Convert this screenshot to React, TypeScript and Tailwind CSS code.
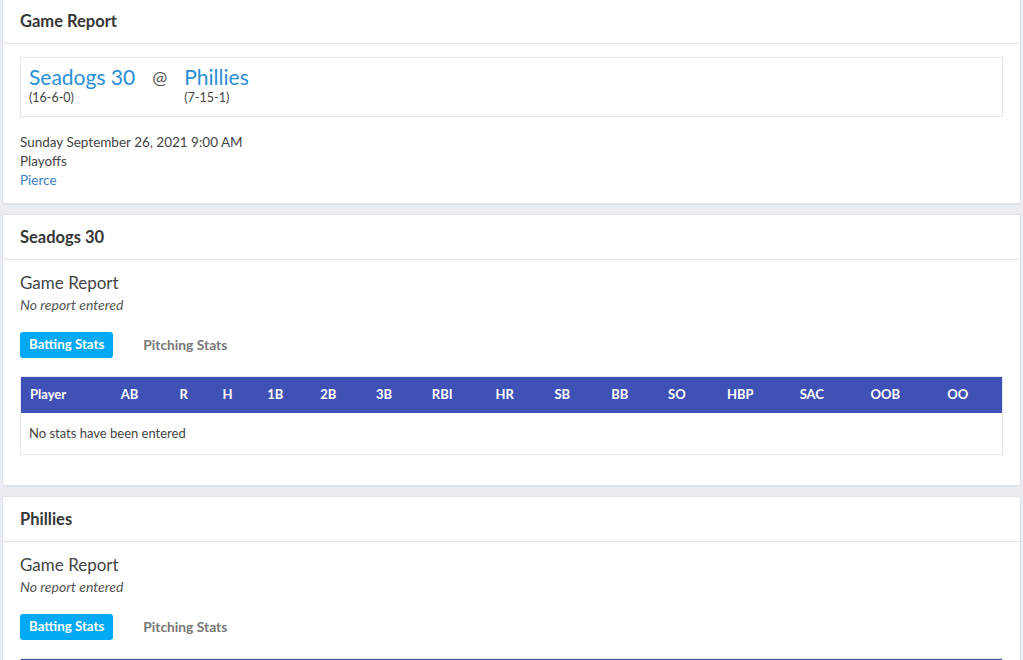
import React from "react"

const columns = [
  { label: "Player", w: "w-[91px]" },
  { label: "AB", w: "w-[59px]" },
  { label: "R", w: "w-[43px]" },
  { label: "H", w: "w-[45px]" },
  { label: "1B", w: "w-[53px]" },
  { label: "2B", w: "w-[56px]" },
  { label: "3B", w: "w-[56px]" },
  { label: "RBI", w: "w-[64px]" },
  { label: "HR", w: "w-[59px]" },
  { label: "SB", w: "w-[57px]" },
  { label: "BB", w: "w-[57px]" },
  { label: "SO", w: "w-[59px]" },
  { label: "HBP", w: "w-[73px]" },
  { label: "SAC", w: "w-[71px]" },
  { label: "OOB", w: "w-[77px]" },
  { label: "OO", w: "w-[64px]" },
]

function Card({ title, children, className = "" }: { title: string; children: React.ReactNode; className?: string }) {
  return (
    <section className={`mx-[2px] bg-white border border-[#dfe3e8] rounded-[3px] shadow-[0_1px_1px_rgba(0,0,0,0.04)] ${className}`}>
      <header className="h-[45px] flex items-center px-[17px] border-b border-[#e2e6eb]">
        <h2 className="text-[16.5px] font-bold text-[#363636]">{title}</h2>
      </header>
      {children}
    </section>
  )
}

function TeamSection({ title }: { title: string }) {
  const [tab, setTab] = React.useState<"batting" | "pitching">("batting")
  return (
    <Card title={title}>
      <div className="px-[17px] pt-[12px] pb-[30px]">
        <h3 className="text-[17px] leading-[22px] text-[#444]">Game Report</h3>
        <p className="text-[14px] leading-[20px] italic text-[#555] mt-[1px]">No report entered</p>

        <div className="flex items-center gap-[10px] mt-[17px]">
          <button
            onClick={() => setTab("batting")}
            className={`h-[26px] px-[9px] rounded-[3px] text-[13.3px] font-bold ${tab === "batting" ? "bg-[#03a9f4] text-white" : "text-[#777]"}`}
          >
            Batting Stats
          </button>
          <button
            onClick={() => setTab("pitching")}
            className={`h-[26px] px-[20px] rounded-[3px] text-[13.8px] font-bold ${tab === "pitching" ? "bg-[#03a9f4] text-white" : "text-[#777]"}`}
          >
            Pitching Stats
          </button>
        </div>

        <div className="mt-[18px] border border-[#e3e7eb]">
          <div className="flex h-[36px] items-center bg-[#3f51b5] text-white text-[13px] font-bold">
            {columns.map((c) => (
              <div key={c.label} className={`${c.w} pl-[9px]`}>{c.label}</div>
            ))}
          </div>
          <div className="h-[41px] flex items-center pl-[8px] text-[13px] text-[#444]">
            No stats have been entered
          </div>
        </div>
      </div>
    </Card>
  )
}

export default function App() {
  return (
    <main className="bg-[#eaedf1] min-h-screen pb-10" style={{ fontFamily: "Lato, 'Open Sans', sans-serif" }}>
      <Card title="Game Report" className="-mt-[2px] rounded-t-none">
        <div className="px-[17px] pt-[13px] pb-[13px]">
          <div className="border border-[#e3e7eb] h-[60px] px-[8px] pt-[6px] flex gap-[17px]">
            <div>
              <a href="#" className="block text-[21px] leading-[26px] text-[#2a8fd6]">Seadogs 30</a>
              <div className="text-[12.5px] text-[#444] leading-[16px]">(16-6-0)</div>
            </div>
            <div className="text-[18px] leading-[26px] text-[#555]">@</div>
            <div>
              <a href="#" className="block text-[21px] leading-[26px] text-[#2a8fd6]">Phillies</a>
              <div className="text-[12.5px] text-[#444] leading-[16px]">(7-15-1)</div>
            </div>
          </div>
          <div className="mt-[16px] text-[13.5px] leading-[19px] text-[#444]">
            <div>Sunday September 26, 2021 9:00 AM</div>
            <div>Playoffs</div>
            <a href="#" className="text-[#3a80c2]">Pierce</a>
          </div>
        </div>
      </Card>

      <div className="mt-[10px]">
        <TeamSection title="Seadogs 30" />
      </div>
      <div className="mt-[10px]">
        <TeamSection title="Phillies" />
      </div>
    </main>
  )
}
